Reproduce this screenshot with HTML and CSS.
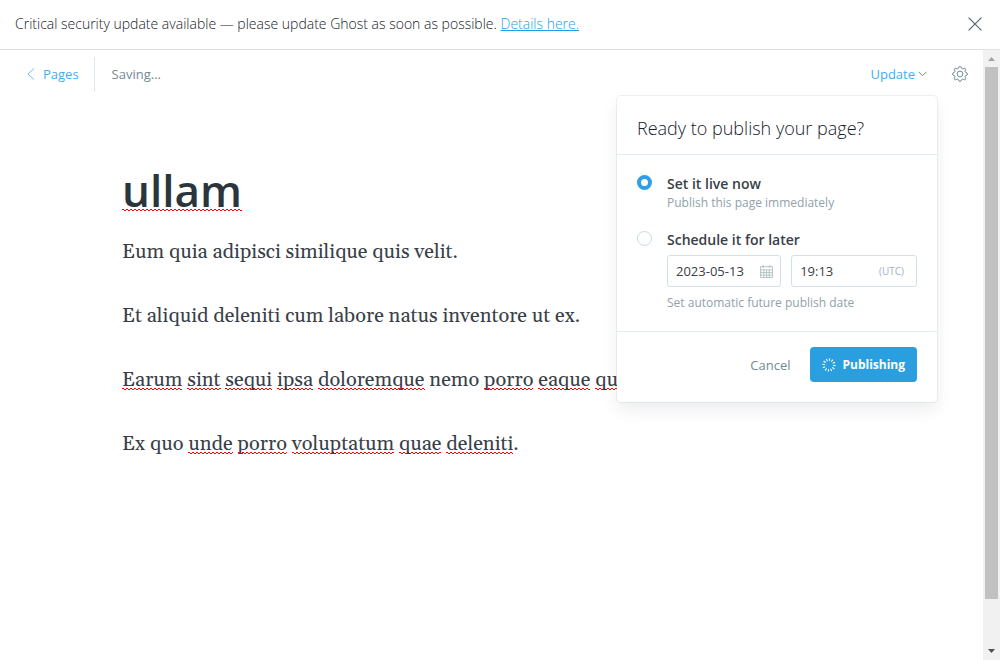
FILE: index.html
```html
<!DOCTYPE html>
<html lang="en">
<head>
<meta charset="utf-8">
<meta name="viewport" content="width=device-width, initial-scale=1">
<title>ullam - Ghost</title>
<link rel="stylesheet" href="styles.css">
</head>
<body>
<aside class="alert">
  <p class="alert-text">Critical security update available — please update Ghost as soon as possible. <a href="#">Details here.</a></p>
  <button class="icon-button" type="button" aria-label="Close">
    <svg class="close-icon" viewBox="0 0 12 12"><path d="M.5.5l11 11M11.5.5l-11 11"/></svg>
  </button>
</aside>
<div class="viewport">
  <div class="editor">
    <header class="toolbar">
      <a class="back" href="#"><svg class="back-icon" viewBox="0 0 8 12"><path d="M7 .5L1 6l6 5.500"/></svg>Pages</a>
      <span class="status">Saving...</span>
      <div class="publish">
        <button class="update" type="button" aria-expanded="true">Update<svg class="chevron" viewBox="0 0 9 6"><path d="M.5.7l4 4 4-4"/></svg></button>
        <form class="popover">
          <h2 class="popover-title">Ready to publish your page?</h2>
          <div class="options">
            <div class="option">
              <input class="radio" type="radio" name="when" id="now" checked>
              <div class="option-body">
                <label class="option-label" for="now">Set it live now</label>
                <p class="hint">Publish this page immediately</p>
              </div>
            </div>
            <div class="option">
              <input class="radio" type="radio" name="when" id="later">
              <div class="option-body">
                <label class="option-label" for="later">Schedule it for later</label>
                <div class="fields">
                  <div class="field field-date">
                    <input class="field-input" type="text" value="2023-05-13" aria-label="Date">
                    <svg class="calendar" viewBox="0 0 12 12"><path d="M.5 1.500h11v10H.5zM.5 4.500h11M.5 7h11M.5 9.300h11M3.500 4.500v7M6 4.500v7M8.500 4.500v7M3 0v3M9 0v3"/></svg>
                  </div>
                  <div class="field field-time">
                    <input class="field-input" type="text" value="19:13" aria-label="Time">
                    <span class="zone">(UTC)</span>
                  </div>
                </div>
                <p class="hint">Set automatic future publish date</p>
              </div>
            </div>
          </div>
          <footer class="actions">
            <button class="cancel" type="button">Cancel</button>
            <button class="submit" type="submit">
              <svg class="spinner" viewBox="-7 -7 14 14"><circle r="5.300" pathLength="120"/></svg>Publishing
            </button>
          </footer>
        </form>
      </div>
      <button class="icon-button" type="button" aria-label="Settings">
        <svg class="gear" viewBox="-8 -8 16 16"><circle r="2.900"/><path d="M-1.600-5.600Q-1.300-7.500 0-7.500T1.600-5.600Q2.100-4.900 2.900-5.100Q4.600-6.200 5.400-5.400T5.100-2.900Q4.900-2.100 5.600-1.600Q7.500-1.300 7.500 0T5.600 1.600Q4.900 2.100 5.100 2.900Q6.200 4.600 5.400 5.400T2.900 5.100Q2.100 4.900 1.600 5.600Q1.300 7.500 0 7.500T-1.600 5.600Q-2.100 4.900-2.900 5.100Q-4.600 6.200-5.400 5.400T-5.100 2.900Q-4.900 2.100-5.600 1.600Q-7.500 1.300-7.500 0T-5.600-1.600Q-4.900-2.100-5.100-2.900Q-6.200-4.600-5.400-5.400T-2.900-5.100Q-2.100-4.900-1.600-5.600Z"/></svg>
      </button>
    </header>
    <main class="post">
      <h1 class="post-title"><span class="typo">ullam</span></h1>
      <p>Eum quia adipisci similique quis velit.</p>
      <p>Et aliquid deleniti cum labore natus inventore ut ex.</p>
      <p><span class="typo">Earum</span> <span class="typo">sint</span> <span class="typo">sequi</span> <span class="typo">ipsa</span> <span class="typo">doloremque</span> nemo <span class="typo">porro</span> <span class="typo">eaque</span> <span class="typo">quia</span>.</p>
      <p>Ex quo <span class="typo">unde</span> <span class="typo">porro</span> <span class="typo">voluptatum</span> <span class="typo">quae</span> <span class="typo">deleniti</span>.</p>
    </main>
  </div>
  <div class="scrollbar" aria-hidden="true">
    <svg class="arrow arrow-up" viewBox="0 0 17 17"><path d="M5 11l3.500-4 3.500 4z"/></svg>
    <div class="thumb"></div>
    <div class="track"></div>
    <svg class="arrow" viewBox="0 0 17 17"><path d="M5 6l3.500 4 3.500-4z"/></svg>
  </div>
</div>
</body>
</html>
```

FILE: styles.css
```css
* { box-sizing: border-box; }
body, h1, h2, p { margin: 0; }
body {
  display: flex;
  flex-direction: column;
  height: 100vh;
  overflow: hidden;
  background: #fff;
  color: #394047;
  font: 13px/20px "Open Sans", "Noto Sans", sans-serif;
}
button, input { font: inherit; color: inherit; }
button { border: 0; padding: 0; background: none; cursor: pointer; }
svg { display: block; fill: none; stroke: currentColor; flex: none; }

.alert {
  display: flex;
  align-items: center;
  justify-content: space-between;
  height: 50px;
  flex: none;
  padding: 0 18px 2px 15px;
  border-bottom: 1px solid #dfe1e3;
}
.alert-text { color: #15212a; font-size: 14px; font-weight: 300; }
.alert a { color: #1d9fe8; }
.icon-button { color: #738a94; }
.alert .icon-button { color: #54666d; }
.close-icon { width: 14px; height: 14px; }

.viewport { display: flex; flex: 1; min-height: 0; }
.editor { flex: 1; min-width: 0; }

.toolbar {
  display: flex;
  align-items: center;
  height: 48px;
  padding: 0 15px 0 27px;
}
.back {
  display: flex;
  align-items: center;
  gap: 8px;
  height: 35px;
  padding-right: 15px;
  border-right: 1px solid #dfe9f0;
  color: #3eb0ef;
  text-decoration: none;
}
.back-icon { width: 8px; height: 12px; stroke-width: 0.8; }
.status { margin-left: 17px; color: #738a94; }
.publish { position: relative; margin-left: auto; }
.update { display: flex; align-items: center; gap: 3px; color: #3eb0ef; }
.chevron { width: 9px; height: 6px; color: #738a94; }
.publish + .icon-button { margin-left: 25px; }
.gear { width: 16px; height: 16px; }

.popover {
  position: absolute;
  z-index: 2;
  top: 32px;
  right: -10px;
  width: 320px;
  border-radius: 4px;
  background: #fff;
  box-shadow: 0 0 0 1px rgba(99, 114, 130, 0.1), 0 8px 16px rgba(27, 39, 51, 0.08);
}
.popover-title {
  padding: 20px 20px 14px;
  border-bottom: 1px solid #e3ecf3;
  color: #15212a;
  font-size: 18px;
  line-height: 24px;
  font-weight: 300;
}
.options { padding: 19px 20px; border-bottom: 1px solid #e3ecf3; }
.option { display: flex; gap: 15px; }
.option + .option { margin-top: 18px; }
.option-body { flex: 1; min-width: 0; }
.radio {
  appearance: none;
  flex: none;
  width: 15px;
  height: 15px;
  margin: 1px 0 0;
  border: 1px solid #c5d9e8;
  border-radius: 50%;
}
.radio:checked { border: 4px solid #2d9fe6; }
.option-label { display: block; font-size: 14px; line-height: 19px; font-weight: 600; }
.hint { color: #8fa2ab; font-size: 12px; line-height: 19px; }
.fields { display: flex; gap: 10px; margin: 6px 0; }
.field {
  display: flex;
  align-items: center;
  height: 32px;
  padding: 0 8px;
  border: 1px solid #d3e2ea;
  border-radius: 3px;
}
.field-date { flex: 116 1 0; padding-right: 7px; }
.field-time { flex: 124 1 0; padding-right: 12px; }
.field-input { flex: 1; width: 0; border: 0; padding: 0; background: none; outline: 0; }
.calendar { width: 13px; height: 13px; color: #aebcc3; stroke-width: 0.8; }
.zone { color: #a3b2ba; font-size: 10px; }
.actions {
  display: flex;
  align-items: center;
  justify-content: flex-end;
  gap: 20px;
  padding: 15px 20px 20px;
}
.cancel { color: #738a94; }
.submit {
  display: flex;
  align-items: center;
  gap: 6px;
  height: 35px;
  padding: 0 12px;
  border-radius: 4px;
  background: #2a9fe0;
  color: #fff;
  font-size: 12px;
  font-weight: 700;
}
.spinner { width: 14px; height: 14px; }
.spinner circle { stroke-width: 2.6; stroke-dasharray: 4 6; }

.post {
  padding: 64px 122px 0;
  color: #394047;
  font: 20px/32px Gelasio, Georgia, "Liberation Serif", serif;
  white-space: nowrap;
}
.post p + p { margin-top: 32px; }
.post-title {
  margin-bottom: 18px;
  color: #2b363c;
  font: 600 44px/56px "Open Sans", "Noto Sans", sans-serif;
}
.typo {
  --wave-bottom: 3px;
  background-image:
    linear-gradient(90deg, #f00 50%, transparent 50%),
    linear-gradient(90deg, transparent 50%, #f00 50%);
  background-repeat: repeat-x;
  background-size: 4px 1px;
  background-position: left 0 bottom calc(var(--wave-bottom) + 1px), left 0 bottom var(--wave-bottom);
}
.post-title .typo { --wave-bottom: 9px; }

.scrollbar { display: flex; flex-direction: column; width: 17px; background: #f1f1f1; }
.arrow { width: 17px; height: 17px; fill: #505050; stroke: none; }
.arrow-up { fill: #a3a3a3; }
.thumb { flex: 532 1 0; margin: 0 2px; background: #c1c1c1; }
.track { flex: 44 1 0; }
```
